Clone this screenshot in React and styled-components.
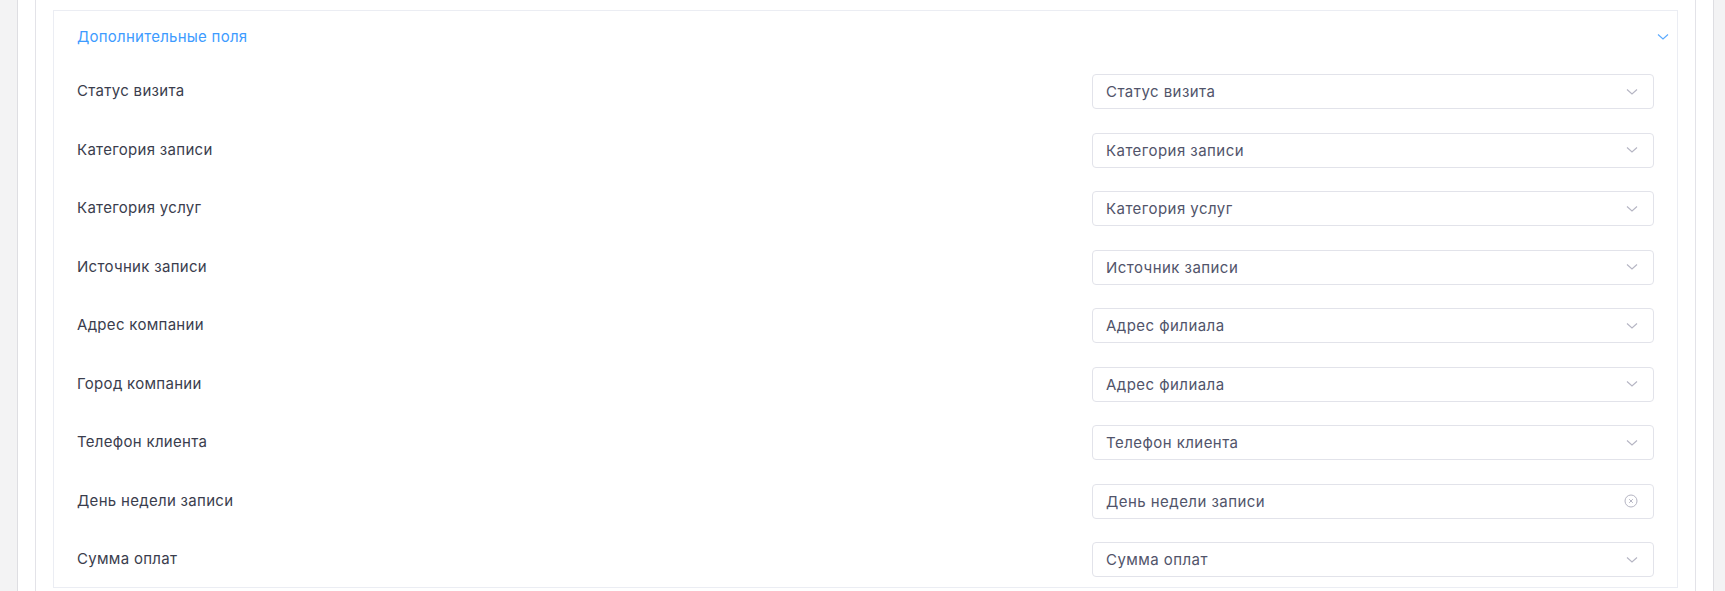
import styled, { createGlobalStyle } from 'styled-components';

const GlobalStyle = createGlobalStyle`
  html, body {
    margin: 0;
    padding: 0;
    background: #f3f3f4;
    font-family: Inter, 'Noto Sans', sans-serif;
  }
`;

const Page = styled.div`
  height: 591px;
  overflow: hidden;
  padding: 0 11px 0 17px;
  background: #f3f3f4;
`;

const Card = styled.div`
  height: 100%;
  background: #fff;
  border-left: 1px solid #dedee2;
  border-right: 1px solid #dedee2;
  padding: 0 17px;
`;

const Inner = styled.div`
  height: 100%;
  border-left: 1px solid #e3e3e8;
  border-right: 1px solid #e3e3e8;
  padding: 10px 17px 0;
`;

const Panel = styled.div`
  border: 1px solid #ebedf3;
  background: #fff;
`;

const Header = styled.div`
  display: flex;
  align-items: center;
  justify-content: space-between;
  padding: 16px 8px 0 23px;
  height: 20px;
  color: #3d9bff;
  font-size: 15px;
  letter-spacing: 0.25px;
  line-height: 20px;
`;

const Body = styled.div`
  display: flex;
  flex-direction: column;
  gap: 23.5px;
  padding: 27px 23px 10px;
`;

const Row = styled.div`
  display: flex;
  align-items: center;
  justify-content: space-between;
`;

const Label = styled.div`
  color: #3a3d4d;
  font-size: 15px;
  letter-spacing: 0.3px;
  margin-top: -2px;
`;

const Select = styled.div`
  box-sizing: border-box;
  width: 562px;
  height: 35px;
  display: flex;
  align-items: center;
  justify-content: space-between;
  padding: 0 15px 0 13px;
  border: 1px solid #e2e3ea;
  border-radius: 4px;
  color: #51546a;
  font-size: 15px;
  letter-spacing: 0.45px;
`;

const Chevron = ({ color = '#b5b5c3', w = 12 }) => (
  <svg width={w} height={w / 2 + 2} viewBox="0 0 12 8" fill="none">
    <path d="M1 1.5 L6 6 L11 1.5" stroke={color} strokeWidth="1.1" />
  </svg>
);

const ClearIcon = () => (
  <svg width="14" height="14" viewBox="0 0 14 14" fill="none">
    <circle cx="7" cy="7" r="6" stroke="#b5b5c3" strokeWidth="1" />
    <path d="M5.2 5.2 L8.8 8.8 M8.8 5.2 L5.2 8.8" stroke="#b5b5c3" strokeWidth="1" />
  </svg>
);

const fields = [
  { label: 'Статус визита', value: 'Статус визита' },
  { label: 'Категория записи', value: 'Категория записи' },
  { label: 'Категория услуг', value: 'Категория услуг' },
  { label: 'Источник записи', value: 'Источник записи' },
  { label: 'Адрес компании', value: 'Адрес филиала' },
  { label: 'Город компании', value: 'Адрес филиала' },
  { label: 'Телефон клиента', value: 'Телефон клиента' },
  { label: 'День недели записи', value: 'День недели записи', clear: true },
  { label: 'Сумма оплат', value: 'Сумма оплат' },
];

const App = () => {
  return (
    <>
      <GlobalStyle />
      <Page>
        <Card>
          <Inner>
            <Panel>
              <Header>
                <span>Дополнительные поля</span>
                <Chevron color="#5aaaff" w={12} />
              </Header>
              <Body>
                {fields.map((f, i) => (
                  <Row key={i}>
                    <Label>{f.label}</Label>
                    <Select>
                      <span>{f.value}</span>
                      {f.clear ? <ClearIcon /> : <Chevron />}
                    </Select>
                  </Row>
                ))}
              </Body>
            </Panel>
          </Inner>
        </Card>
      </Page>
    </>
  );
};

export default App;
